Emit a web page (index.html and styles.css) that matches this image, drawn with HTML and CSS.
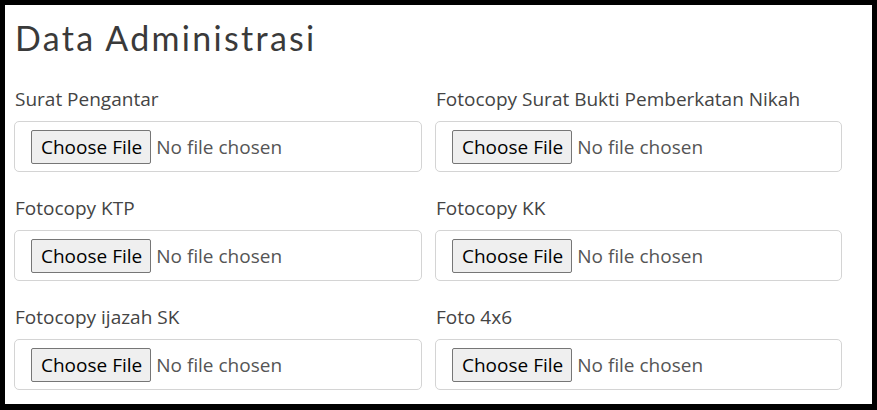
FILE: index.html
```html
<!DOCTYPE html>
<html lang="id">
<head>
<meta charset="utf-8">
<title>Data Administrasi</title>
<link rel="stylesheet" href="styles.css">
</head>
<body>
<div class="frame">
  <h3 class="title">Data Administrasi</h3>
  <div class="grid">
    <div class="field">
      <label class="label">Surat Pengantar</label>
      <input class="control" type="file">
    </div>
    <div class="field">
      <label class="label">Fotocopy Surat Bukti Pemberkatan Nikah</label>
      <input class="control" type="file">
    </div>
    <div class="field">
      <label class="label">Fotocopy KTP</label>
      <input class="control" type="file">
    </div>
    <div class="field">
      <label class="label">Fotocopy KK</label>
      <input class="control" type="file">
    </div>
    <div class="field">
      <label class="label">Fotocopy ijazah SK</label>
      <input class="control" type="file">
    </div>
    <div class="field">
      <label class="label">Foto 4x6</label>
      <input class="control" type="file">
    </div>
  </div>
</div>
</body>
</html>
```
FILE: styles.css
```css
* { box-sizing: border-box; }
html, body { margin: 0; padding: 0; background: #fff; }
body { width: 877px; height: 410px; overflow: hidden; }
.frame {
  width: 877px;
  height: 410px;
  border-style: solid;
  border-color: #000;
  border-width: 5px 5px 6px 5px;
  padding: 0 30px 0 9px;
  background: #fff;
}
.title {
  margin: 0;
  padding: 11px 0 0 1px;
  height: 82px;
  font-family: Lato, "Open Sans", sans-serif;
  font-weight: 400;
  font-size: 34px;
  line-height: 44px;
  color: #3a3a3a;
  letter-spacing: 2.3px;
}
.grid {
  display: grid;
  grid-template-columns: 408px 407px;
  column-gap: 13px;
  row-gap: 24px;
}
.field { display: flex; flex-direction: column; }
.label {
  font-family: "Open Sans", sans-serif;
  font-size: 19px;
  line-height: 24px;
  color: #444;
  padding-left: 1px;
  margin-bottom: 10px;
}
.control {
  display: block;
  width: 100%;
  height: 51px;
  padding: 8px 16px;
  border: 1px solid #d4d4d4;
  border-radius: 5px;
  background: #fff;
  font-family: "Open Sans", sans-serif;
  font-size: 19px;
  color: #555;
}
.control::file-selector-button {
  font-family: "Open Sans", sans-serif;
  font-size: 19px;
  color: #000;
  height: 34px;
  padding: 0 8px 0 9px;
  margin-right: 5px;
  background: #efefef;
  border: 1px solid #767676;
  border-radius: 2px;
}
```
